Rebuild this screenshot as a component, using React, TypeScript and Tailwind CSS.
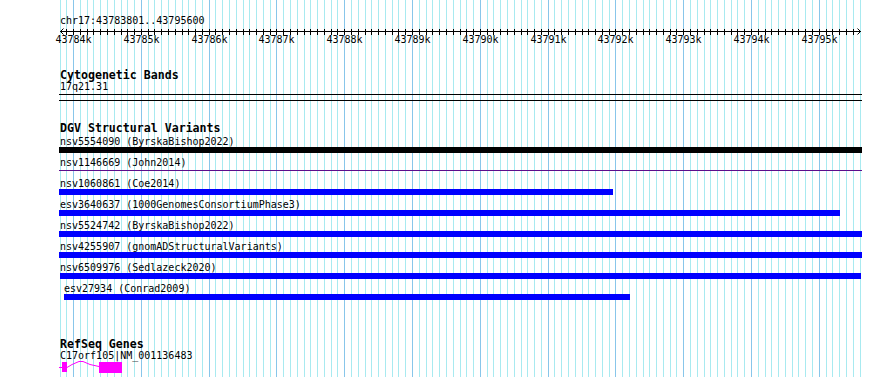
const START = 43783800;
const END = 43795600;
const LEFT = 60;
const TRACK_W = 800;

// genome position -> pixel column
const px = (p: number) => Math.floor(LEFT + ((p - START) * TRACK_W) / (END - START));

const GRID = Array.from({ length: (END - START) / 100 + 1 }, (_, i) => START + i * 100);
const MAJOR = GRID.filter((p) => p % 1000 === 0);

const VARIANTS = [
  { label: "nsv5554090 (ByrskaBishop2022)", start: 59, end: 862, kind: "black" },
  { label: "nsv1146669 (John2014)", start: 59, end: 862, kind: "line" },
  { label: "nsv1060861 (Coe2014)", start: 59, end: 613, kind: "blue" },
  { label: "esv3640637 (1000GenomesConsortiumPhase3)", start: 59, end: 840, kind: "blue" },
  { label: "nsv5524742 (ByrskaBishop2022)", start: 59, end: 862, kind: "blue" },
  { label: "nsv4255907 (gnomADStructuralVariants)", start: 59, end: 862, kind: "blue" },
  { label: "nsv6509976 (Sedlazeck2020)", start: 60, end: 861, kind: "blue" },
  { label: "esv27934 (Conrad2009)", start: 64, end: 630, kind: "blue" },
];

function Grid() {
  return (
    <svg className="absolute inset-0" width={890} height={377}>
      {GRID.map((p) => (
        <rect key={p} x={px(p)} y={0} width={1} height={377} fill={p % 1000 === 0 ? "#88c6ea" : "#a8eaf0"} />
      ))}
    </svg>
  );
}

function Ruler() {
  return (
    <svg width={890} height={20} className="block">
      <line x1={60} y1={4.5} x2={861} y2={4.5} stroke="#000" />
      <polyline points="63.5,1.5 60.5,4.5 63.5,7.5" fill="none" stroke="#000" />
      <polyline points="857.5,1.5 860.5,4.5 857.5,7.5" fill="none" stroke="#000" />
      {GRID.slice(1, -1).map((p) => (
        <line key={p} x1={px(p) + 0.5} y1={2} x2={px(p) + 0.5} y2={8} stroke="#000" />
      ))}
      {MAJOR.map((p) => (
        <text
          key={p}
          x={px(p) + 0.5}
          y={16}
          textAnchor="middle"
          fontFamily="'DejaVu Sans Mono', monospace"
          fontSize={10}
          fill="#000"
        >
          {p / 1000}k
        </text>
      ))}
    </svg>
  );
}

function TrackTitle({ children, className = "" }: { children: string; className?: string }) {
  return (
    <div className={`h-[12px] pl-[60px] text-[11.6px] leading-[12px] font-bold whitespace-nowrap ${className}`}>
      {children}
    </div>
  );
}

function VariantRow({ label, start, end, kind }: { label: string; start: number; end: number; kind: string }) {
  const w = end - start;
  return (
    <div className="h-[21px]">
      <div className="h-[11px] text-[10px] leading-[11px] whitespace-nowrap" style={{ paddingLeft: start === 64 ? 64 : 60 }}>
        {label}
      </div>
      <div className="h-[6px]" style={{ marginLeft: start }}>
        {kind === "line" ? (
          <div className="mt-[2px] h-px bg-[#5c0e8c]" style={{ width: w }} />
        ) : (
          <div className={`h-[6px] ${kind === "black" ? "bg-black" : "bg-[#0000ff]"}`} style={{ width: w }} />
        )}
      </div>
    </div>
  );
}

function Gene() {
  return (
    <svg width={890} height={16} className="block">
      <line x1={59} y1={6.5} x2={62} y2={6.5} stroke="#ff00ff" />
      <rect x={62} y={1} width={5} height={10} fill="#ff00ff" />
      <polyline points="67,6.5 72,3.5 79,0.5 83,0.5 90,3.5 99,5.5" fill="none" stroke="#ff00ff" />
      <rect x={99} y={1} width={23} height={11} fill="#ff00ff" />
    </svg>
  );
}

export default function App() {
  return (
    <div className="relative h-[377px] w-[890px] overflow-hidden bg-white text-black font-['DejaVu_Sans_Mono',monospace]">
      <Grid />
      <div className="relative flex flex-col pt-[15px]">
        <div className="h-[12px] pl-[60px] text-[10px] leading-[12px]">chr17:43783801..43795600</div>
        <Ruler />

        <TrackTitle className="mt-[22px]">Cytogenetic Bands</TrackTitle>
        <div className="h-[12px] pl-[60px] text-[10px] leading-[12px]">17q21.31</div>
        <div className="mt-px ml-[59px] h-[7px] w-[803px] border-y border-black" />

        <TrackTitle className="mt-[21px]">DGV Structural Variants</TrackTitle>
        <div className="mt-[2px]">
          {VARIANTS.map((v) => (
            <VariantRow key={v.label} {...v} />
          ))}
        </div>

        <TrackTitle className="mt-[34px]">RefSeq Genes</TrackTitle>
        <div className="h-[11px] pl-[60px] text-[10px] leading-[11px]">C17orf105|NM_001136483</div>
        <Gene />
      </div>
    </div>
  );
}
